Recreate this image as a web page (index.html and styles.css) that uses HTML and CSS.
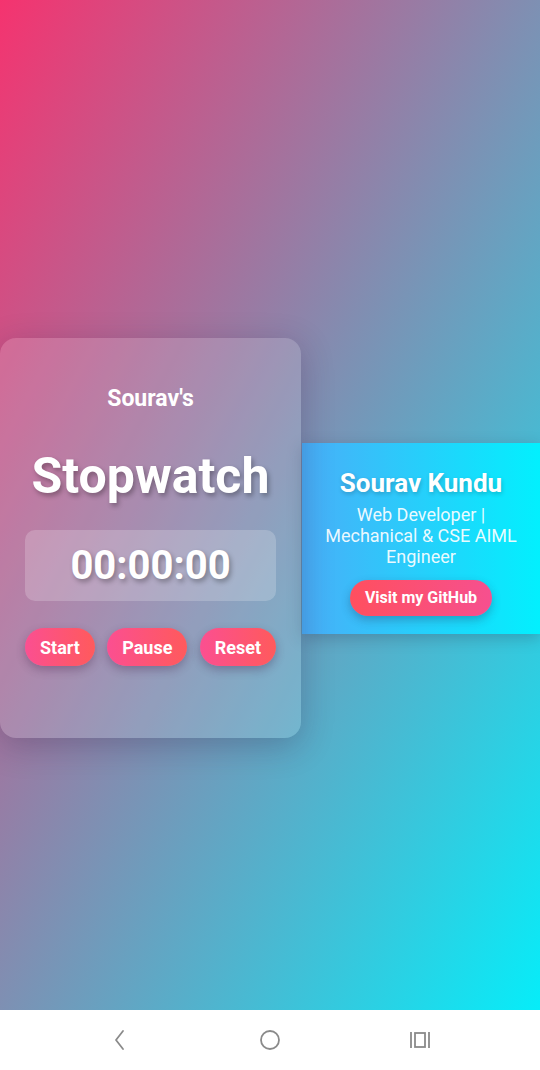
FILE: index.html
```html
<!DOCTYPE html>
<html>
<head>
<meta charset="utf-8">
<link rel="stylesheet" href="styles.css">
</head>
<body>
<div class="screen">
  <div class="row">
    <div class="card">
      <h3 class="owner">Sourav's</h3>
      <h1 class="title">Stopwatch</h1>
      <div class="timer">00:00:00</div>
      <div class="controls">
        <button class="btn">Start</button>
        <button class="btn">Pause</button>
        <button class="btn">Reset</button>
      </div>
    </div>
    <div class="profile">
      <h2 class="name">Sourav Kundu</h2>
      <p class="role">Web Developer | Mechanical &amp; CSE AIML Engineer</p>
      <a class="gh">Visit my GitHub</a>
    </div>
  </div>
</div>
<div class="navbar">
  <svg class="nav-icon" width="24" height="24" viewBox="0 0 24 24"><path d="M16 3 L9 12 L16 21" fill="none" stroke="#8a8a8a" stroke-width="1.8" stroke-linecap="round" stroke-linejoin="round"/></svg>
  <svg class="nav-icon" width="24" height="24" viewBox="0 0 24 24"><circle cx="12" cy="12" r="9" fill="none" stroke="#8a8a8a" stroke-width="1.8"/></svg>
  <svg class="nav-icon" width="24" height="24" viewBox="0 0 24 24"><path d="M3 4 V20 M21 4 V20" stroke="#8a8a8a" stroke-width="1.8"/><rect x="7" y="5" width="10" height="14" fill="none" stroke="#8a8a8a" stroke-width="1.8"/></svg>
</div>
</body>
</html>
```
FILE: styles.css
```css
* { box-sizing: border-box; }
html, body { margin: 0; padding: 0; }
body {
  width: 540px;
  height: 1070px;
  overflow: hidden;
  font-family: Roboto, "Noto Sans", sans-serif;
  color: #fff;
}
.screen {
  height: 1010px;
  background: linear-gradient(to bottom right, #f5336f 0%, #7e90b3 50%, #06edf9 100%);
  padding-top: 338px;
  overflow: hidden;
}
.row {
  display: flex;
  align-items: center;
}
.card {
  flex: 0 0 301px;
  width: 301px;
  height: 400px;
  border-radius: 16px;
  background: rgba(255,255,255,0.14);
  box-shadow: 0 8px 32px rgba(40,20,60,0.25);
  padding: 49px 25px 0;
  text-align: center;
  position: relative;
  z-index: 2;
}
.owner {
  margin: 0;
  font-size: 23px;
  line-height: 24px;
  font-weight: 700;
}
.title {
  margin: 37px 0 0;
  font-size: 50px;
  line-height: 56px;
  font-weight: 700;
  text-shadow: 2px 3px 5px rgba(0,0,0,0.3);
}
.timer {
  margin-top: 26px;
  height: 71px;
  line-height: 71px;
  border-radius: 10px;
  background: rgba(255,255,255,0.2);
  font-size: 40px;
  font-weight: 700;
  text-shadow: 2px 3px 5px rgba(0,0,0,0.3);
}
.controls {
  margin-top: 27px;
  display: flex;
  justify-content: space-between;
}
.btn {
  height: 38px;
  border: none;
  border-radius: 19px;
  padding: 0 15px;
  font-family: inherit;
  font-size: 18px;
  font-weight: 700;
  color: #fff;
  background: linear-gradient(90deg, #fb4f91, #ff5a5c);
  box-shadow: 0 4px 10px rgba(60,20,60,0.3);
}
.profile {
  flex: 0 0 238px;
  width: 238px;
  height: 191px;
  margin-left: 1px;
  background: linear-gradient(90deg, #4aaef8, #02f0fe);
  box-shadow: 0 4px 14px rgba(30,40,70,0.25);
  padding: 26px 16px 0;
  text-align: center;
  display: flex;
  flex-direction: column;
  align-items: center;
}
.name {
  margin: 0;
  font-size: 26px;
  line-height: 28px;
  font-weight: 700;
  text-shadow: 1px 2px 4px rgba(0,0,0,0.2);
}
.role {
  margin: 7px 0 0;
  font-size: 18px;
  line-height: 21px;
  color: rgba(255,255,255,0.92);
}
.gh {
  margin-top: 13px;
  height: 36px;
  line-height: 36px;
  padding: 0 15px;
  border-radius: 18px;
  font-size: 16px;
  font-weight: 700;
  color: #fff;
  background: linear-gradient(90deg, #ff4f5f, #f6508f);
  box-shadow: 0 4px 10px rgba(40,40,80,0.3);
}
.navbar {
  height: 60px;
  background: #fff;
  display: flex;
  align-items: center;
  justify-content: space-between;
  padding: 0 108px 0 107px;
}
.nav-icon { display: block; }
```
